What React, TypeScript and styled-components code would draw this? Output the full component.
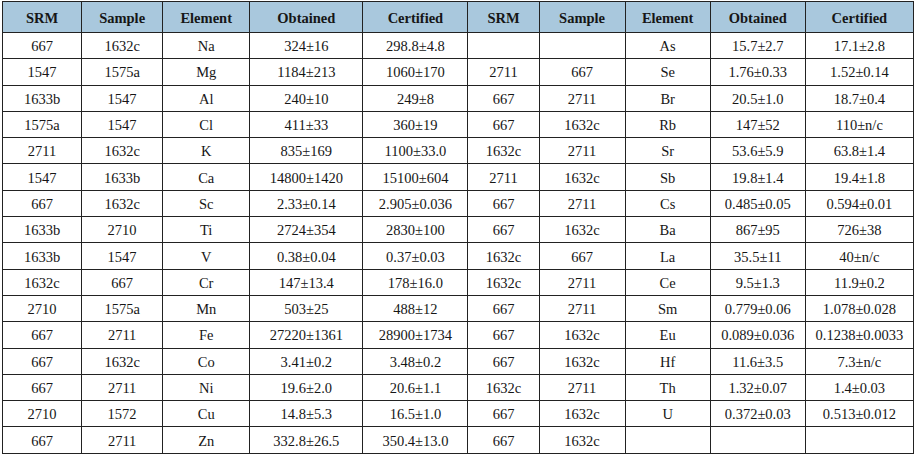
import React from "react";
import styled, { createGlobalStyle } from "styled-components";

const Global = createGlobalStyle`
  html, body { margin: 0; padding: 0; background: #ffffff; }
`;

const Wrap = styled.div`
  padding: 1px 0 0 2px;
  width: 918px;
  height: 456px;
  box-sizing: border-box;
  overflow: hidden;
`;

const Table = styled.table`
  border-collapse: collapse;
  table-layout: fixed;
  width: 912px;
  font-family: "Liberation Serif", "Times New Roman", serif;
  font-size: 14.5px;
  line-height: 16px;
  color: #161616;
`;

const HeadRow = styled.tr`
  height: 31px;
`;

const BodyRow = styled.tr`
  height: 26.3px;
`;

const HeadCell = styled.th`
  background: #a9c8dd;
  font-weight: bold;
  padding: 2px 0 0;
  text-align: center;
  border: 1px solid #222;
`;

const Cell = styled.td`
  padding: 1px 0 0;
  text-align: center;
  border: 1px solid #222;
  white-space: nowrap;
`;

const widths = [79, 81, 87, 113, 105, 71, 86, 85, 95, 108];
const heads = ["SRM", "Sample", "Element", "Obtained", "Certified", "SRM", "Sample", "Element", "Obtained", "Certified"];

const rows: string[][] = [
  ["667", "1632c", "Na", "324±16", "298.8±4.8", "", "", "As", "15.7±2.7", "17.1±2.8"],
  ["1547", "1575a", "Mg", "1184±213", "1060±170", "2711", "667", "Se", "1.76±0.33", "1.52±0.14"],
  ["1633b", "1547", "Al", "240±10", "249±8", "667", "2711", "Br", "20.5±1.0", "18.7±0.4"],
  ["1575a", "1547", "Cl", "411±33", "360±19", "667", "1632c", "Rb", "147±52", "110±n/c"],
  ["2711", "1632c", "K", "835±169", "1100±33.0", "1632c", "2711", "Sr", "53.6±5.9", "63.8±1.4"],
  ["1547", "1633b", "Ca", "14800±1420", "15100±604", "2711", "1632c", "Sb", "19.8±1.4", "19.4±1.8"],
  ["667", "1632c", "Sc", "2.33±0.14", "2.905±0.036", "667", "2711", "Cs", "0.485±0.05", "0.594±0.01"],
  ["1633b", "2710", "Ti", "2724±354", "2830±100", "667", "1632c", "Ba", "867±95", "726±38"],
  ["1633b", "1547", "V", "0.38±0.04", "0.37±0.03", "1632c", "667", "La", "35.5±11", "40±n/c"],
  ["1632c", "667", "Cr", "147±13.4", "178±16.0", "1632c", "2711", "Ce", "9.5±1.3", "11.9±0.2"],
  ["2710", "1575a", "Mn", "503±25", "488±12", "667", "2711", "Sm", "0.779±0.06", "1.078±0.028"],
  ["667", "2711", "Fe", "27220±1361", "28900±1734", "667", "1632c", "Eu", "0.089±0.036", "0.1238±0.0033"],
  ["667", "1632c", "Co", "3.41±0.2", "3.48±0.2", "667", "1632c", "Hf", "11.6±3.5", "7.3±n/c"],
  ["667", "2711", "Ni", "19.6±2.0", "20.6±1.1", "1632c", "2711", "Th", "1.32±0.07", "1.4±0.03"],
  ["2710", "1572", "Cu", "14.8±5.3", "16.5±1.0", "667", "1632c", "U", "0.372±0.03", "0.513±0.012"],
  ["667", "2711", "Zn", "332.8±26.5", "350.4±13.0", "667", "1632c", "", "", ""],
];

export default function App() {
  return (
    <>
      <Global />
      <Wrap>
        <Table>
          <colgroup>
            {widths.map((w, i) => (
              <col key={i} style={{ width: w }} />
            ))}
          </colgroup>
          <thead>
            <HeadRow>
              {heads.map((h, i) => (
                <HeadCell key={i}>{h}</HeadCell>
              ))}
            </HeadRow>
          </thead>
          <tbody>
            {rows.map((r, i) => (
              <BodyRow key={i}>
                {r.map((c, j) => (
                  <Cell key={j}>{c}</Cell>
                ))}
              </BodyRow>
            ))}
          </tbody>
        </Table>
      </Wrap>
    </>
  );
}
